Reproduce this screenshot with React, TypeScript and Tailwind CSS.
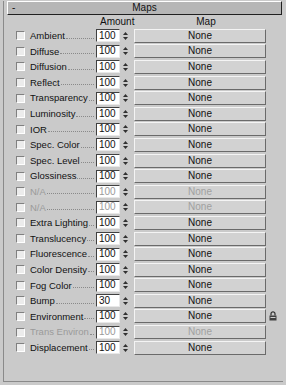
import React from "react";

type MapRow = {
  label: string;
  amount: string;
  disabled?: boolean;
  lock?: boolean;
};

const rows: MapRow[] = [
  { label: "Ambient", amount: "100" },
  { label: "Diffuse", amount: "100" },
  { label: "Diffusion", amount: "100" },
  { label: "Reflect", amount: "100" },
  { label: "Transparency", amount: "100" },
  { label: "Luminosity", amount: "100" },
  { label: "IOR", amount: "100" },
  { label: "Spec. Color", amount: "100" },
  { label: "Spec. Level", amount: "100" },
  { label: "Glossiness", amount: "100" },
  { label: "N/A", amount: "100", disabled: true },
  { label: "N/A", amount: "100", disabled: true },
  { label: "Extra Lighting", amount: "100" },
  { label: "Translucency", amount: "100" },
  { label: "Fluorescence", amount: "100" },
  { label: "Color Density", amount: "100" },
  { label: "Fog Color", amount: "100" },
  { label: "Bump", amount: "30" },
  { label: "Environment", amount: "100", lock: true },
  { label: "Trans Environ", amount: "100", disabled: true },
  { label: "Displacement", amount: "100" },
];

function Spinner() {
  return (
    <div className="flex h-[13px] w-[9px] flex-col items-center justify-center gap-[2px]">
      <svg width="5" height="3" viewBox="0 0 5 3">
        <path d="M2.5 0 L5 3 L0 3 Z" fill="#303030" />
      </svg>
      <svg width="5" height="3" viewBox="0 0 5 3">
        <path d="M0 0 L5 0 L2.5 3 Z" fill="#303030" />
      </svg>
    </div>
  );
}

function Lock() {
  return (
    <svg width="8" height="10" viewBox="0 0 8 10">
      <path d="M2 4.5 V2.8 A2 2 0 0 1 6 2.8 V4.5" fill="none" stroke="#303030" strokeWidth="1.2" />
      <rect x="0.5" y="4.5" width="7" height="5" fill="#404040" />
      <rect x="1.5" y="6" width="5" height="1" fill="#d0d0d0" />
    </svg>
  );
}

function Row({ row }: { row: MapRow }) {
  const text = row.disabled ? "text-[#9a9a9a]" : "text-[#111]";
  return (
    <div className="flex h-[15.6px] items-center">
      <div className="ml-[12px] h-[9px] w-[9px] border-t border-l border-t-[#808080] border-l-[#808080] border-r border-b border-r-white border-b-white bg-[#ececec]" />
      <div className={`ml-[5px] flex w-[64px] items-end whitespace-nowrap text-[9.5px] ${text}`}>
        <span>{row.label}</span>
        <div className="mb-[2px] ml-[1px] min-w-0 flex-1 border-b border-dotted border-[#8a8a8a]" />
      </div>
      <div
        className={`ml-[2px] flex h-[13px] w-[24px] items-center border-t border-l border-t-[#404040] border-l-[#404040] border-r border-b border-r-[#e8e8e8] border-b-[#e8e8e8] bg-white pl-[2px] ${text}`}
      >
        {row.amount}
      </div>
      <div className="ml-[1px]">
        <Spinner />
      </div>
      <div
        className={`ml-[4px] flex h-[14px] w-[132px] items-center justify-center border-t border-l border-t-[#f4f4f4] border-l-[#f4f4f4] border-r border-b border-r-[#6a6a6a] border-b-[#6a6a6a] bg-[#d2d2d2] ${row.disabled ? "text-[#a0a0a0]" : "text-[#111]"}`}
      >
        None
      </div>
      <div className="ml-[2px] flex w-[10px] justify-center">{row.lock ? <Lock /> : null}</div>
    </div>
  );
}

export default function App() {
  return (
    <div
      className="h-[385px] w-[286px] overflow-hidden bg-[#cacaca] pl-[3px] pt-[1px] text-[10px] leading-none"
      style={{ fontFamily: '"Liberation Sans", Arial, sans-serif' }}
    >
      <div className="h-[381px] w-[280px] border-l border-b border-[#8a8a8a]">
        <div className="ml-[3px] flex h-[14px] w-[275px] items-center border-t border-l border-t-white border-l-white border-r border-b border-r-[#202020] border-b-[#202020] bg-[#b6b6b6] text-[#111]">
          <span className="ml-[4px] w-[10px]">-</span>
          <span className="flex-1 pr-[14px] text-center">Maps</span>
        </div>
        <div className="flex h-[13px] items-center text-[#111]">
          <span className="ml-[96px] w-[34px] text-center">Amount</span>
          <span className="ml-[6px] w-[132px] text-center">Map</span>
        </div>
        <div className="flex flex-col">
          {rows.map((r, i) => (
            <Row key={i} row={r} />
          ))}
        </div>
      </div>
    </div>
  );
}
